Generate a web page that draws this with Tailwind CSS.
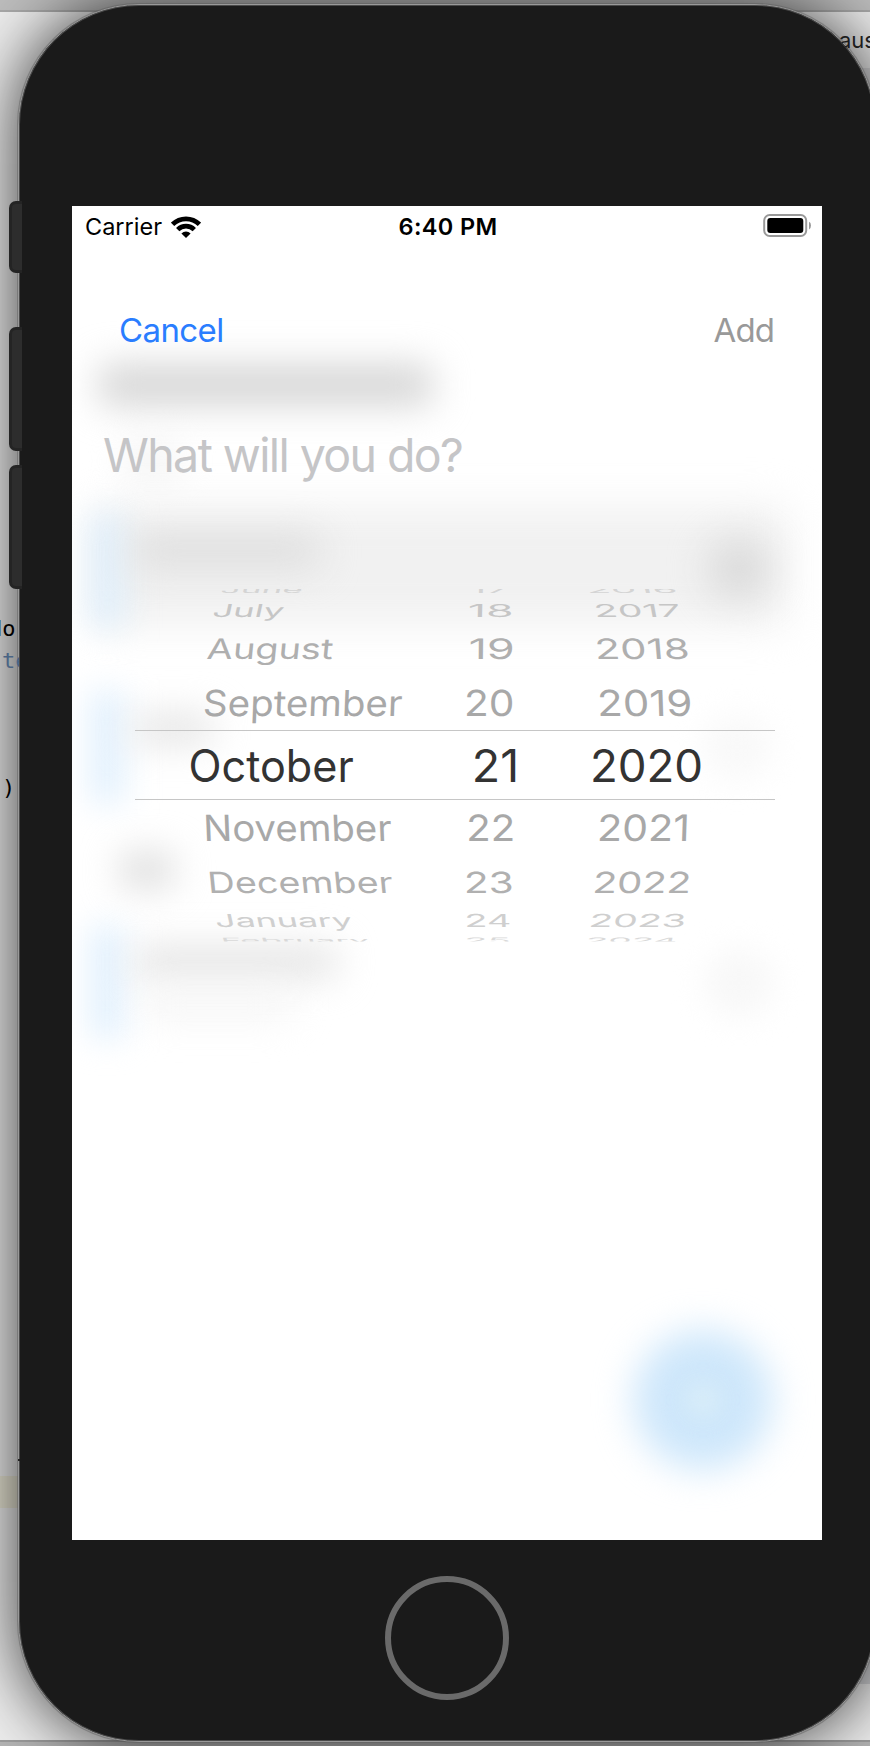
<!DOCTYPE html>
<html lang="en">
<head>
<meta charset="utf-8">
<title>New reminder</title>
<script src="https://cdn.jsdelivr.net/npm/@tailwindcss/browser@4"></script>
</head>
<body class="bg-[#ededed]">
<div class="relative h-[1746px] w-[870px] overflow-hidden bg-[#ededed] font-['Inter',sans-serif]">
  <!-- editor window behind the device -->
  <div class="absolute inset-x-0 top-0 h-[10px] bg-[#bdbdbd]"></div>
  <div class="absolute inset-x-0 top-[10px] h-[2px] bg-[#a8a8a8]"></div>
  <div class="absolute top-[68px] right-0 h-[40px] w-[40px] bg-[#d9d9db]"></div>
  <div class="absolute right-0 top-[1587px] h-[97px] w-[40px] bg-[#d2d3d6]"></div>
  <div class="absolute inset-x-0 bottom-[4px] h-[2px] bg-[#9c9c9c]"></div>
  <div class="absolute inset-x-0 bottom-0 h-[4px] bg-[#b4b4b4]"></div>
  <div class="absolute left-0 top-[1476px] h-[32px] w-[20px] bg-[#e9e6d5]"></div>

  <!-- device -->
  <div class="relative mt-[4px] ml-[18px] flex h-[1738px] w-[858px] flex-col rounded-[121px] border border-[#999] bg-[#1a1a1a] pt-[201px] pl-[53px] shadow-[0_0_0_1px_rgba(90,90,90,0.45),0_0_68px_rgba(0,0,0,0.78),inset_0_0_0_1px_#4a4a4a]">
    <!-- screen -->
    <div class="relative h-[1334px] w-[750px] overflow-hidden bg-white">
      <!-- frosted content -->
      <div class="absolute left-[26px] top-[158px] h-[42px] w-[335px] rounded-[10px] bg-[#d6d6d6] blur-[18px]"></div>
      <div class="absolute left-[50px] top-[235px] h-[40px] w-[60px] rounded-[20px] bg-[#f4f4f4] blur-[18px]"></div>
      <div class="absolute left-[24px] top-[300px] h-[120px] w-[692px] rounded-[10px] bg-[#f1f1f1] blur-[20px]"></div>
      <div class="absolute left-[18px] top-[308px] h-[114px] w-[34px] bg-[#dfeefa] blur-[16px]"></div>
      <div class="absolute left-[62px] top-[328px] h-[34px] w-[186px] rounded-[10px] bg-[#dedede] blur-[18px]"></div>
      <div class="absolute left-[637px] top-[333px] h-[60px] w-[60px] rounded-full bg-[#d9d9d9] blur-[19px]"></div>
      <div class="absolute left-[18px] top-[485px] h-[112px] w-[34px] bg-[#e1f0fd] blur-[16px]"></div>
      <div class="absolute left-[60px] top-[508px] h-[30px] w-[82px] rounded-[10px] bg-[#e4e4e4] blur-[18px]"></div>
      <div class="absolute left-[630px] top-[508px] h-[66px] w-[70px] rounded-full bg-[#f9f9f9] blur-[15px]"></div>
      <div class="absolute left-[48px] top-[646px] h-[36px] w-[54px] rounded-[10px] bg-[#dddddd] blur-[18px]"></div>
      <div class="absolute left-[18px] top-[720px] h-[112px] w-[34px] bg-[#e1f0fd] blur-[16px]"></div>
      <div class="absolute left-[62px] top-[740px] h-[32px] w-[204px] rounded-[10px] bg-[#e4e4e4] blur-[18px]"></div>
      <div class="absolute left-[70px] top-[785px] h-[28px] w-[150px] rounded-[10px] bg-[#f5f5f5] blur-[18px]"></div>
      <div class="absolute left-[632px] top-[742px] h-[70px] w-[70px] rounded-full bg-[#f8f8f8] blur-[15px]"></div>
      <div class="absolute left-[561px] top-[1124px] h-[140px] w-[140px] rounded-full bg-[#cee7fb] blur-[18px]"></div>
      <div class="absolute left-[616px] top-[1179px] h-[30px] w-[30px] rounded-full bg-[#dceff8] blur-[12px]"></div>

      <!-- sheet -->
      <div class="relative flex flex-col">
        <div class="grid h-[40px] grid-cols-3 items-center pl-[13px] pr-[11px] leading-none text-black">
          <div class="flex items-center gap-[9px] pt-[2px]">
            <span class="text-[23.5px]">Carrier</span>
            <svg class="-mt-[1px] h-[24px] w-[30px]" viewBox="0 0 30 24" fill="none" stroke="#000" stroke-width="4.7">
              <path d="M1.6 9.3A19.2 19.2 0 0 1 28.4 9.3"/>
              <path d="M6.7 14.6A11.8 11.8 0 0 1 23.3 14.6"/>
              <path d="M15 23L10.4 18.4A6.5 6.5 0 0 1 19.6 18.4Z" fill="#000" stroke="none"/>
            </svg>
          </div>
          <span class="pt-[2px] text-center text-[23.5px] font-semibold tracking-[0.35px]">6:40 PM</span>
          <svg class="h-[24px] w-[50px] justify-self-end" viewBox="0 0 50 24">
            <rect x="3.2" y="1" width="42" height="21" rx="5.5" fill="none" stroke="#999" stroke-width="2"/>
            <rect x="6.3" y="4" width="36" height="15" rx="3" fill="#000"/>
            <path d="M48 7.8Q50 8.6 50 11.6T48 15.4Z" fill="#999"/>
          </svg>
        </div>
        <div class="mt-[64px] flex h-[40px] items-center justify-between pl-[47px] pr-[48px] text-[33px] leading-none">
          <span class="tracking-[-0.6px] text-[#2a7dff]">Cancel</span>
          <span class="tracking-[-0.9px] text-[#999]">Add</span>
        </div>
        <div class="mt-[75px] h-[60px] pl-[31px] text-[46.5px] leading-[60px] tracking-[-1.6px] text-[#c5c5c7]">What will you do?</div>
        <svg id="wheel" class="mt-[76px] h-[400px] w-[750px]" viewBox="72 561 750 400" font-family="Inter, sans-serif" font-size="44.5">
          <defs><clipPath id="drum"><rect x="72" y="589" width="750" height="352.5"/></clipPath></defs>
          <g id="rows" clip-path="url(#drum)"></g>
          <path d="M135 730.5H775M135 799.5H775" stroke="#c6c6c6"/>
        </svg>
      </div>
    </div>
    <div class="mt-[36px] ml-[313px] h-[124px] w-[124px] rounded-full border-[6px] border-[#6a6a6a]"></div>
  </div>

  <!-- side buttons -->
  <div class="absolute left-[9px] top-[201px] h-[72px] w-[13px] rounded-l-[7px] border-[3px] border-r-0 border-[#242424] bg-[#2d2d2d]"></div>
  <div class="absolute left-[9px] top-[327px] h-[124px] w-[13px] rounded-l-[7px] border-[3px] border-r-0 border-[#242424] bg-[#2d2d2d]"></div>
  <div class="absolute left-[9px] top-[465px] h-[124px] w-[13px] rounded-l-[7px] border-[3px] border-r-0 border-[#242424] bg-[#2d2d2d]"></div>

  <!-- visible slivers of editor text -->
  <div class="absolute left-0 top-[614px] h-[30px] w-[18px] overflow-hidden font-['DejaVu_Sans_Mono',monospace] text-[22px] leading-[30px] text-black"><span class="-ml-[11px]">do</span></div>
  <div class="absolute left-[2px] top-[646px] h-[30px] w-[17px] overflow-hidden font-['DejaVu_Sans_Mono',monospace] text-[22px] leading-[30px] text-[#4a6484]">te</div>
  <div class="absolute left-[2px] top-[773px] h-[30px] w-[17px] overflow-hidden font-['DejaVu_Sans_Mono',monospace] text-[22px] leading-[30px] text-black">)</div>
  <div class="absolute left-[18px] top-[1459px] h-[2px] w-[2px] bg-[#222]"></div>
  <div class="absolute left-[839px] top-[25px] h-[30px] w-[31px] overflow-hidden text-[22px] leading-[30px] text-[#1c1c1c] [clip-path:polygon(0_0,100%_0,100%_100%,12px_100%,0_14px)]">aus</div>
</div>
<script>
// Each drum row: cap top, baseline, tilt, colour, then [label, left ink, right ink] per column
const rows = [
  [585.5, 592.5, .3, '#d4d4d4', ['June',222.5,301.5], ['17',472,508], ['2016',589,675]],
  [603.5, 616.7, .22, '#c6c6c6', ['July',214.5,283.5], ['18',470,511], ['2017',596.5,679.5]],
  [638, 659, .1, '#afafaf', ['August',208,333], ['19',470.5,512], ['2018',597.5,687]],
  [689, 715.6, .04, '#a8a8a8', ['September',204.8,402], ['20',466.8,512.5], ['2019',600,690]],
  [749, 782, 0, '#333333', ['October',190.5,353], ['21',475,516], ['2020',593,701]],
  [814.5, 841.4, -.04, '#a8a8a8', ['November',205.8,391], ['22',469,512.5], ['2021',600,687]],
  [871.2, 892.8, -.1, '#b0b0b0', ['December',210,392], ['23',466.7,511.5], ['2022',595.5,688.5]],
  [913.5, 926.8, -.22, '#cfcfcf', ['January',216.5,351], ['24',467,510], ['2023',592,684]],
  [937, 942.5, -.3, '#d9d9d9', ['February',223,368], ['25',467,509], ['2024',588.5,676]]
];
const ctx = document.createElement('canvas').getContext('2d');
ctx.font = '44.5px Inter, sans-serif';
const capHeight = ctx.measureText('H').actualBoundingBoxAscent;
const group = document.getElementById('rows');
for (const [top, base, tilt, fill, ...cells] of rows) {
  cells.forEach(([label, x0, x1], i) => {
    const m = ctx.measureText(label), ink = m.actualBoundingBoxRight + m.actualBoundingBoxLeft;
    const sx = (x1 - x0) / ink, sy = (base - top) / capHeight;
    const k = tilt * [-1, -.1, .85][i];
    const mid = (base - top) / 2;
    const t = document.createElementNS('http://www.w3.org/2000/svg', 'text');
    t.setAttribute('transform', `matrix(${sx} 0 ${k * sy} ${sy} ${x0 + m.actualBoundingBoxLeft * sx + k * mid} ${base})`);
    t.setAttribute('fill', fill);
    t.textContent = label;
    group.appendChild(t);
  });
}
</script>
</body>
</html>
